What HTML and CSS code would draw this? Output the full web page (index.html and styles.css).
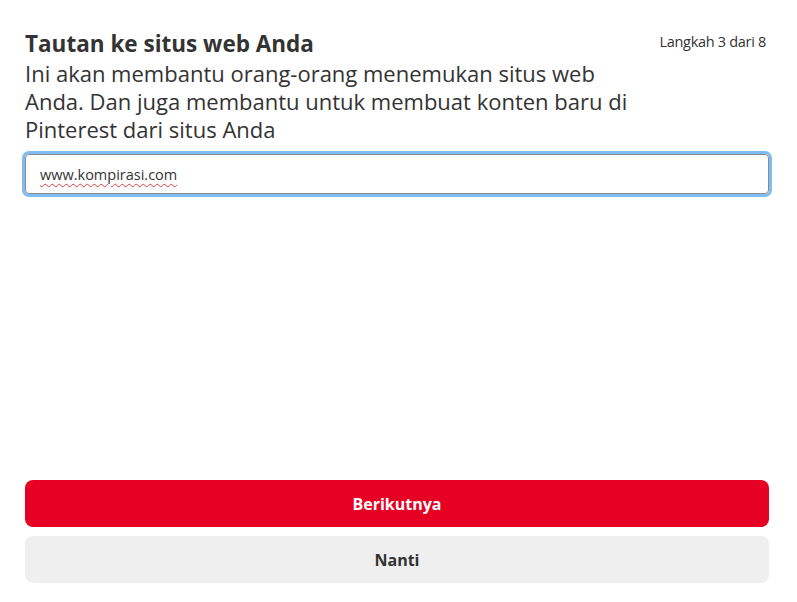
FILE: index.html
```html
<!DOCTYPE html>
<html lang="id">
<head>
    <meta charset="UTF-8">
    <meta name="viewport" content="width=device-width, initial-scale=1.0">
    <title>Tautan situs web</title>
    <link rel="stylesheet" href="styles.css">
</head>
<body>

<div class="step-page">
    <!-- Header: title, description and step counter -->
    <div class="step-header">
        <div class="step-text">
            <h1>Tautan ke situs web Anda</h1>
            <p>Ini akan membantu orang-orang menemukan situs web Anda. Dan juga membantu untuk membuat konten baru di Pinterest dari situs Anda</p>
        </div>
        <div class="step-count">Langkah 3 dari 8</div>
    </div>

    <!-- Website field -->
    <div class="url-field"><span class="misspelled">www.kompirasi.com</span></div>

    <div class="spacer"></div>

    <!-- Actions -->
    <div class="actions">
        <button class="btn btn-next">Berikutnya</button>
        <button class="btn btn-later">Nanti</button>
    </div>
</div>

</body>
</html>
```
FILE: styles.css
```css
html, body { margin: 0; height: 100%; background: #fff; }
body { font-family: "Open Sans", "Noto Sans", sans-serif; color: #333; }
.step-page { height: 100%; box-sizing: border-box; padding: 29px 28px 19px 25px; display: flex; flex-direction: column; }
.step-header { display: flex; justify-content: space-between; align-items: flex-start; }
.step-text { max-width: 620px; }
.step-text h1 { margin: 0; font-size: 22.5px; line-height: 30px; font-weight: 700; color: #333; }
.step-text p { margin: 0; font-size: 22px; line-height: 28px; color: #333; }
.step-count { font-size: 14.5px; margin: 3px 3px 0 0; color: #333; white-space: nowrap; letter-spacing: -0.3px; }
.url-field { margin-top: 11px; height: 38px; border: 1px solid #8a8a8a; border-radius: 4px; box-shadow: 0 0 0 3px #7fbcf3; padding: 0 14px; display: flex; align-items: center; font-size: 14.5px; color: #333; }
.misspelled { text-decoration: underline wavy #e0393e; text-decoration-thickness: 1px; text-underline-offset: 3px; }
.spacer { flex: 1; }
.actions { display: flex; flex-direction: column; gap: 9px; }
.btn { height: 47px; border: none; border-radius: 8px; font-family: inherit; font-size: 16px; font-weight: 700; cursor: pointer; }
.btn-next { background-color: #e60023; color: #fff; }
.btn-later { background-color: #efefef; color: #333; }
```
